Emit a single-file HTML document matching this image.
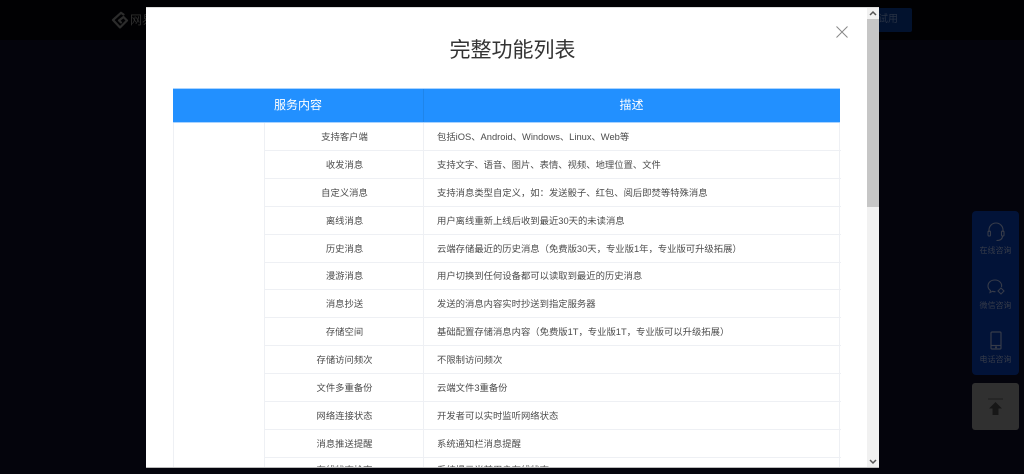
<!DOCTYPE html>
<html lang="zh"><head><meta charset="utf-8"><title>完整功能列表</title>
<style>
*{box-sizing:border-box;margin:0;padding:0}
html,body{width:1024px;height:474px;overflow:hidden;background:#04040c;font-family:"Liberation Sans","Noto Sans CJK SC",sans-serif}
.abs{position:absolute}
#top{left:0;top:0;width:1024px;height:40px;background:#010103}
#logo{left:130px;top:12px;font-size:12px;line-height:16px;color:#2e2e2e;white-space:nowrap}
#try{left:870px;top:8px;width:42px;height:24px;background:#02122e;border-radius:2px;color:#283244;font-size:10px;line-height:24px;text-align:right;padding-right:14px}
#side{left:972px;top:211px;width:47px;height:164px;background:#021338;border-radius:4px}
.si{position:absolute;left:0;width:47px;text-align:center;color:#363b49;font-size:8px;line-height:10px}
#up{left:972px;top:383px;width:47px;height:47px;background:#303030;border-radius:3px}
#modal{left:146px;top:7px;width:733px;height:461px;background:#fff;overflow:hidden;border-top:1px solid #ddd;border-bottom:1px solid #bbb}
#title{position:absolute;left:0;width:733px;top:29px;text-align:center;font-size:21px;line-height:28px;color:#333}
#bar{position:absolute;right:0;top:0;width:12px;height:461px;background:#f1f1f1}
#thumb{position:absolute;left:0;top:11px;width:12px;height:188px;background:#c6c6c6}
#head{position:absolute;left:27px;top:80px;width:667px;height:35px;background:#2290ff;border-top:1px solid #a9d3ff;border-bottom:1px solid #a9d3ff;color:#fff;font-size:12px;line-height:33px}
#head span{position:absolute;top:0;text-align:center}
#head i{position:absolute;left:250px;top:0;width:1px;height:33px;background:#1f85ea}
#tb{position:absolute;left:27px;top:115px;width:667px;height:360px;border-left:1px solid #eef0f4;border-right:1px solid #eef0f4}
.v{position:absolute;top:0;width:1px;height:360px;background:#eef0f4}
.r{position:absolute;left:91px;width:576px;height:28px;border-bottom:1px solid #eef0f4;font-size:9.33px;line-height:28px;color:#4c4c4c;white-space:nowrap}
.r b{position:absolute;left:0;width:159px;text-align:center;font-weight:400}
.r u{position:absolute;left:172px;text-decoration:none}
</style></head><body>
<div class="abs" id="top"></div>
<svg class="abs" style="left:111px;top:11px" width="18" height="18" viewBox="0 0 18 18" fill="none" stroke="#2c2c2c" stroke-width="2.200" stroke-linejoin="round" stroke-linecap="round"><path d="M12.500 3.500L10 1.800 2 9l7 7.500 7-7-3.500-3.500L8 9.500l2 2"/></svg>
<div class="abs" id="logo">网易</div>
<div class="abs" id="try">试用</div>
<div class="abs" id="side">
 <svg class="abs" style="left:14px;top:10px" width="20" height="22" viewBox="0 0 20 22" fill="none" stroke="#363b49" stroke-width="1.100"><path d="M3 11V9a7 7 0 0 1 14 0v2"/><rect x="2" y="10" width="2.500" height="5" rx="1"/><rect x="15.500" y="10" width="2.500" height="5" rx="1"/><path d="M16.500 15c0 3-2 4.500-6 4.500"/></svg>
 <div class="si" style="top:35px">在线咨询</div>
 <svg class="abs" style="left:14px;top:66px" width="20" height="20" viewBox="0 0 20 20" fill="none" stroke="#363b49" stroke-width="1.100"><path d="M15.500 10c.8-3.500-2-7-6.500-7S2 5.800 2 9c0 2 1 3.500 2.500 4.500L4 15.500l2.500-1.200c1 .3 2 .4 3 .4"/><path d="M15 11l3 3-3 3-3-3z"/></svg>
 <div class="si" style="top:90px">微信咨询</div>
 <svg class="abs" style="left:17px;top:120px" width="14" height="20" viewBox="0 0 14 20" fill="none" stroke="#363b49" stroke-width="1.200"><rect x="2" y="1" width="10" height="17" rx="1"/><path d="M2 14.500h10"/><circle cx="7" cy="16.300" r=".5"/></svg>
 <div class="si" style="top:144px">电话咨询</div>
</div>
<div class="abs" id="up">
 <svg class="abs" style="left:14px;top:14px" width="20" height="20" viewBox="0 0 20 20"><path d="M2 1.500h15v1H2z" fill="#1c1c1c"/><path d="M9.500 5L16 11.500h-3.500V18h-6v-6.500H3z" fill="#171717"/></svg>
</div>
<div class="abs" id="modal">
 <div id="title">完整功能列表</div>
 <svg class="abs" style="left:689px;top:17px" width="14" height="14" viewBox="0 0 14 14" stroke="#888" stroke-width="1" fill="none"><path d="M1.500 1.500l11 11M12.500 1.500l-11 11"/></svg>
 <div id="head"><span style="left:0;width:250px">服务内容</span><i></i><span style="left:250px;width:417px">描述</span></div>
 <div id="tb">
  <div class="v" style="left:90px"></div><div class="v" style="left:249px"></div>
  <div class="r" style="top:0"><b>支持客户端</b><u>包括iOS、Android、Windows、Linux、Web等</u></div>
  <div class="r" style="top:28px"><b>收发消息</b><u>支持文字、语音、图片、表情、视频、地理位置、文件</u></div>
  <div class="r" style="top:56px"><b>自定义消息</b><u>支持消息类型自定义，如：发送骰子、红包、阅后即焚等特殊消息</u></div>
  <div class="r" style="top:84px"><b>离线消息</b><u>用户离线重新上线后收到最近30天的未读消息</u></div>
  <div class="r" style="top:112px"><b>历史消息</b><u>云端存储最近的历史消息（免费版30天，专业版1年，专业版可升级拓展）</u></div>
  <div class="r" style="top:139px"><b>漫游消息</b><u>用户切换到任何设备都可以读取到最近的历史消息</u></div>
  <div class="r" style="top:167px"><b>消息抄送</b><u>发送的消息内容实时抄送到指定服务器</u></div>
  <div class="r" style="top:195px"><b>存储空间</b><u>基础配置存储消息内容（免费版1T，专业版1T，专业版可以升级拓展）</u></div>
  <div class="r" style="top:223px"><b>存储访问频次</b><u>不限制访问频次</u></div>
  <div class="r" style="top:251px"><b>文件多重备份</b><u>云端文件3重备份</u></div>
  <div class="r" style="top:279px"><b>网络连接状态</b><u>开发者可以实时监听网络状态</u></div>
  <div class="r" style="top:307px"><b>消息推送提醒</b><u>系统通知栏消息提醒</u></div>
  <div class="r" style="top:335px;line-height:25px"><b>在线状态检查</b><u>系统提示当前用户在线状态</u></div>
 </div>
 <div id="bar"><div id="thumb"></div>
  <svg class="abs" style="left:0;top:0" width="12" height="11" viewBox="0 0 12 11" fill="none" stroke="#555" stroke-width="1.500"><path d="M3 7l3-3 3 3"/></svg>
  <svg class="abs" style="left:0;top:448px" width="12" height="11" viewBox="0 0 12 11" fill="none" stroke="#555" stroke-width="1.500"><path d="M3 4l3 3 3-3"/></svg>
 </div>
</div>
</body></html>
